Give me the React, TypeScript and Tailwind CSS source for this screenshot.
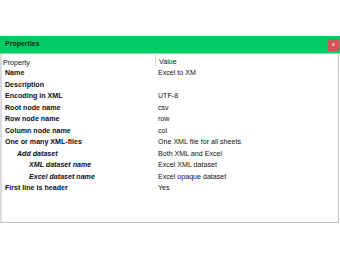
import React from 'react';

interface PropRow {
  label: string;
  value: string;
  indent?: 0 | 1 | 2;
}

const rows: PropRow[] = [
  { label: 'Name', value: 'Excel to XM' },
  { label: 'Description', value: '' },
  { label: 'Encoding in XML', value: 'UTF-8' },
  { label: 'Root node name', value: 'csv' },
  { label: 'Row node name', value: 'row' },
  { label: 'Column node name', value: 'col' },
  { label: 'One or many XML-files', value: 'One XML file for all sheets' },
  { label: 'Add dataset', value: 'Both XML and Excel', indent: 1 },
  { label: 'XML dataset name', value: 'Excel XML dataset', indent: 2 },
  { label: 'Excel dataset name', value: 'Excel opaque dataset', indent: 2 },
  { label: 'First line is header', value: 'Yes' },
];

const indentClass = (indent?: number) => {
  if (indent === 1) return 'pl-[15px] italic';
  if (indent === 2) return 'pl-[27px] italic';
  return 'pl-[3px]';
};

const App: React.FC = () => {
  return (
    <div
      className="w-[340px] h-[260px] bg-white pt-[36px] text-[7.1px] text-[#111]"
      style={{ fontFamily: '"Liberation Sans", Arial, sans-serif' }}
    >
      <div className="w-[340px] h-[18px] bg-[#00cc66] border-b border-[#7fe6a8] flex items-center justify-between pl-[5px] pr-[1px]">
        <span className="text-[7px] font-semibold text-[#0d2a16]">Properties</span>
        <button className="w-[11px] h-[12px] bg-[#cf5656] flex items-center justify-center">
          <span className="text-[5px] font-bold leading-none text-[#f5dcdc]">x</span>
        </button>
      </div>

      <div className="w-[339px] h-[169px] border border-t-0 border-[#c4c4c4] border-l-2 border-l-[#dcdcdc]">
        <div className="flex h-[14px]">
          <div className="w-[153px] pl-[1px] pt-[5px] leading-[8px]">Property</div>
          <div className="h-[12px] border-l border-[#d8d8d8] pl-[3px] pt-[4px] leading-[8px]">Value</div>
        </div>
        {rows.map((r) => (
          <div key={r.label} className="flex h-[11.5px] items-center">
            <div className={`w-[154px] font-bold text-[#0c0c1c] ${indentClass(r.indent)}`}>{r.label}</div>
            <div className="pl-[2px]">{r.value}</div>
          </div>
        ))}
      </div>
    </div>
  );
};

export default App;
